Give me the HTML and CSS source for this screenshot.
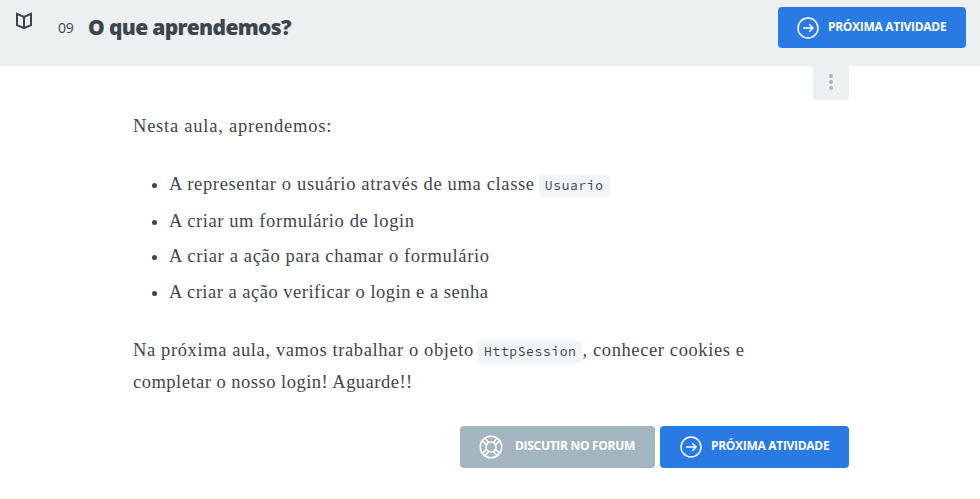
FILE: index.html
```html
<!DOCTYPE html>
<html lang="pt-BR">
<head>
<meta charset="utf-8">
<title>O que aprendemos?</title>
<link rel="stylesheet" href="styles.css">
</head>
<body>
<header class="header">
  <svg class="book" viewBox="0 0 18 18" width="18" height="18"><path d="M2 1.800 9 4.800l7-3v11.400L9 16.200l-7-3zM9 5v11"/></svg>
  <span class="number">09</span>
  <h1 class="title">O que aprendemos?</h1>
  <a class="button button-top">
    <svg class="icon" viewBox="0 0 22 22" width="22" height="22"><circle cx="11" cy="11" r="10"/><path d="M6 11h10M12.300 7.300 16 11l-3.700 3.700"/></svg>
    <span class="label">PRÓXIMA ATIVIDADE</span>
  </a>
</header>
<main class="content">
  <button class="more" aria-label="Mais"><i></i><i></i><i></i></button>
  <article class="text">
    <p><span class="l1">Nesta aula, aprendemos:</span></p>
    <ul>
      <li class="first"><span class="l2">A representar o usuário através de uma classe</span> <code>Usuario</code></li>
      <li><span class="l3">A criar um formulário de login</span></li>
      <li><span class="l4">A criar a ação para chamar o formulário</span></li>
      <li><span class="l5">A criar a ação verificar o login e a senha</span></li>
    </ul>
    <p><span class="l6">Na próxima aula, vamos trabalhar o objeto</span> <code>HttpSession</code><span class="l7">, conhecer cookies e</span><br><span class="l8">completar o nosso login! Aguarde!!</span></p>
  </article>
  <div class="actions">
    <a class="button button-forum">
      <svg class="icon" viewBox="0 0 24 24" width="24" height="24"><circle cx="12" cy="12" r="10.800"/><circle cx="12" cy="12" r="5"/><path d="m3.200 5.900 4.300 3.700M5.900 3.200l3.700 4.300M18.100 3.200l-3.700 4.300M20.800 5.900l-4.300 3.700M20.800 18.100l-4.300-3.700M18.100 20.800l-3.700-4.300M5.900 20.800l3.700-4.300M3.200 18.100l4.300-3.700"/></svg>
      <span class="label">DISCUTIR NO FORUM</span>
    </a>
    <a class="button button-next">
      <svg class="icon" viewBox="0 0 22 22" width="22" height="22"><circle cx="11" cy="11" r="10"/><path d="M6 11h10M12.300 7.300 16 11l-3.700 3.700"/></svg>
      <span class="label">PRÓXIMA ATIVIDADE</span>
    </a>
  </div>
</main>
</body>
</html>
```
FILE: styles.css
```css
* { box-sizing: border-box; }
body { margin: 0; background: #fff; color: #3d464d; font-family: "Open Sans", sans-serif; }
.header { display: flex; align-items: flex-start; height: 66px; padding: 7px 14px 0 15px; background: #ecf0f1; }
.book { margin-top: 5px; fill: none; stroke: #3d464d; stroke-width: 2; }
.number { width: 30px; margin-left: 25px; font-size: 14px; line-height: 42px; letter-spacing: -0.2px; }
.title { margin: 0; font-size: 21px; font-weight: 800; line-height: 40px; letter-spacing: -0.65px; white-space: nowrap; }
.button { display: flex; align-items: center; height: 42px; border-radius: 4px; background: #2a7ae4; color: #fff; font-size: 12px; font-weight: 700; white-space: nowrap; }
.button-top { width: 188px; height: 41px; margin-left: auto; padding-left: 19px; }
.icon { flex: none; fill: none; stroke: #fff; stroke-width: 1.5; }
.label { margin-left: 9px; line-height: 16px; letter-spacing: -0.3px; }
.button-top .label { padding-bottom: 1px; }
.actions .label { padding-bottom: 2px; }
.content { width: 716px; margin-left: 133px; }
.more { display: flex; flex-direction: column; align-items: center; justify-content: center; gap: 2px; width: 36px; height: 34px; margin: 0 0 0 680px; padding: 0 0 2px; border: 0; border-radius: 0 0 3px 3px; background: #ecf0f1; }
.more i { width: 4px; height: 4px; border-radius: 50%; background: #a3b5bf; }
.text { padding-top: 10px; font-family: "Source Serif Pro", "Liberation Serif", serif; font-size: 18.5px; line-height: 32px; white-space: nowrap; }
.text p { margin: 0; }
.text ul { margin: 26px 0; padding-left: 36px; }
.text li { height: 32px; margin-bottom: 4px; }
.text li.first { margin-bottom: 5px; }
.text li:nth-child(2) { margin-bottom: 3px; }
.text li:last-child { margin-bottom: 0; }
.l1 { letter-spacing: 0.77px; }
.l2, .l4 { letter-spacing: 0.65px; }
.l3 { letter-spacing: 0.6px; }
.l5 { letter-spacing: 0.5px; }
.l6, .l7 { letter-spacing: 0.61px; }
.l8 { letter-spacing: 0.49px; }
code { display: inline-block; height: 22px; margin-left: -0.5px; padding: 0 6px; border-radius: 3px; background: #f0f4f6; font-family: "Source Code Pro", "DejaVu Sans Mono", monospace; font-size: 13px; line-height: 22px; letter-spacing: 0.6px; vertical-align: 0.5px; }
.actions { display: flex; gap: 5px; justify-content: flex-end; margin-top: 28px; }
.button-forum { width: 195px; padding-left: 19px; background: #a3b5bf; }
.button-forum .label { margin-left: 12px; }
.button-next { width: 189px; padding-left: 20px; }
```
